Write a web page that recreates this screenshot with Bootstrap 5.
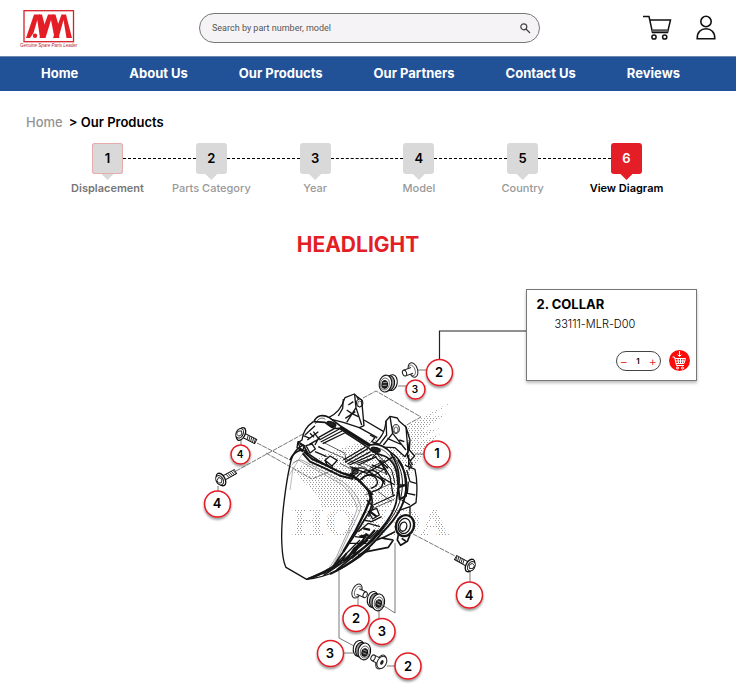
<!DOCTYPE html>
<html lang="en">
<head>
<meta charset="utf-8">
<meta name="viewport" content="width=device-width, initial-scale=1">
<title>Headlight – Our Products</title>
<link href="https://cdn.jsdelivr.net/npm/bootstrap@5.3.0/dist/css/bootstrap.min.css" rel="stylesheet">
<style>
  :root { --brand-red: #e31e26; --brand-blue: #215196; }
  body { font-family: Inter, "Liberation Sans", sans-serif; color: #000; background: #fff; }
  .site-head { height: 56px; padding: 0 20px; }
  .brand-logo { width: 58px; height: 40px; display: block; overflow: visible; }
  .search-box { height: 30px; margin: 0 103px 0 121px; background: #f5f3f5; border: 1px solid #777; border-radius: 15px; padding: 0 8px 0 12px; }
  .search-box .form-control { font: 400 9px/16px Roboto, "Liberation Sans", sans-serif; color: #555; min-height: 0; height: 20px; }
  .search-box .form-control::placeholder { color: #555; opacity: 1; }
  .head-tools { gap: 24px; }
  .main-nav { height: 35px; padding: 0 56px 2px 41px; background: var(--brand-blue); border-top: 1px solid #7189ad; }
  .main-nav a { font-size: 13px; line-height: 16px; font-weight: 700; }
  .crumbs { padding: 23px 26px 0; gap: 6px; font-size: 13px; line-height: 16px; }
  .crumbs a { color: #949494; font-weight: 500; }
  .crumbs .here { font-weight: 600; }
  .steps { padding: 13px 94px 0 92px; }
  .step { width: 31px; }
  .step-num { width: 31px; height: 31px; border-radius: 3px; background: #d9d9d9; font-size: 13px; line-height: 31px; font-weight: 600; }
  .step-tip { width: 12px; height: 6px; background: #d9d9d9; clip-path: polygon(0 0, 100% 0, 50% 100%); }
  .step-name { font-size: 11px; line-height: 16px; font-weight: 500; color: #999; white-space: nowrap; }
  .step.first .step-num { box-shadow: inset 0 0 0 1px #e7abae; }
  .step.first .step-name { color: #777; font-weight: 600; }
  .step.active .step-num { background: var(--brand-red); color: #fff; }
  .step.active .step-tip { background: var(--brand-red); }
  .step.active .step-name { color: #000; font-weight: 600; }
  .step-line { height: 0; margin-top: 15px; border-top: 1px dashed #000; }
  .part-title { margin: 37px 20px 0 0; font-size: 21px; line-height: 24px; font-weight: 700; color: var(--brand-red); }
  .diagram { margin-top: 13px; }
  .diagram svg.art { display: block; width: 100%; height: auto; }
  .diagram a { text-decoration: none; }
  .part-card { left: 71.4%; top: 19px; width: 171px; border: 1px solid #777; border-radius: 0; box-shadow: 0 2px 3px #0004; padding: 6px 6px 9px 10px; }
  .part-card h2 { font-size: 13px; line-height: 16px; font-weight: 700; margin: 0; }
  .part-code { font-size: 11px; line-height: 16px; font-weight: 300; padding-left: 18px; margin: 4px 0 18px; }
  .qty { width: 45px; height: 20px; border: 1px solid #444; border-radius: 10px; padding: 0 3px; }
  .qty button { width: 8px; font-size: 13px; line-height: 16px; color: var(--brand-red); background: none; font-weight: 300; }
  .qty input { width: 16px; font-size: 8px; line-height: 16px; font-weight: 600; background: none; }
  .add-btn { width: 21px; height: 21px; background: #f80d0d; }
  .mark-big { font: 600 13px Inter, sans-serif; }
  .mark-small { font: 600 10px Inter, sans-serif; }
  .wm { font: 700 36px "DejaVu Serif", serif; }
</style>
<script src="https://cdn.jsdelivr.net/npm/bootstrap@5.3.0/dist/js/bootstrap.bundle.min.js"></script>
</head>
<body>
<header>
  <div class="site-head d-flex align-items-center">
    <a href="#" aria-label="Genuine Spare Parts Leader" class="flex-shrink-0">
      <svg class="brand-logo" viewBox="0 0 58 40">
        <rect x="4" y="2.700" width="49.500" height="31" fill="#fff" stroke="#d5222a" stroke-width="1.300"/>
        <g fill="#e31e26">
          <path d="M6 30L14 6.500H20L25 30H20L17.300 12L13.500 25L10 30z"/>
          <path d="M19.500 30L28 6.500H34L39.500 30H34.500L31 12L25.500 30z"/>
          <path d="M33 30L41.500 6.500H46L52 30H46.500L43.500 12L38.500 30z"/>
          <path d="M19 6.500L22 6.500L26.500 24L24 29zM32.500 6.500H35.500L40 22L38 28z"/>
        </g>
        <circle cx="15" cy="27.800" r="2.200" fill="#e31e26"/>
        <text x="0" y="38.500" font-family="Liberation Sans, sans-serif" font-size="4.500" font-style="italic" fill="#b3262c">Genuine Spare Parts Leader</text>
      </svg>
    </a>
    <form class="search-box d-flex align-items-center flex-fill" role="search">
      <label for="q" class="visually-hidden">Search</label>
      <input id="q" type="text" class="form-control border-0 bg-transparent shadow-none p-0" placeholder="Search by part number, model">
      <button type="button" class="btn p-0 border-0 d-flex" aria-label="Search">
        <svg width="12" height="12" viewBox="0 0 12 12" fill="none" stroke="#444" stroke-width="1.200"><circle cx="4.800" cy="4.800" r="3"/><path d="M7 7l4 4"/></svg>
      </button>
    </form>
    <div class="head-tools d-flex align-items-center flex-shrink-0">
      <a href="#" aria-label="Cart" class="d-flex">
        <svg width="29" height="26" viewBox="0 0 29 26" fill="none" stroke="#111" stroke-width="1.500">
          <path d="M0 1.500H6L9.500 17.500H24.500L27.500 5H7"/><path d="M9 15.500H25" stroke="#555" stroke-width="2.500"/>
          <circle cx="11" cy="22" r="2.100"/><circle cx="21.700" cy="22" r="2.100"/>
        </svg>
      </a>
      <a href="#" aria-label="Account" class="d-flex">
        <svg width="20" height="26" viewBox="0 0 20 26" fill="none" stroke="#111" stroke-width="1.600">
          <circle cx="10" cy="6.500" r="5.200"/><path d="M1.200 23.800C1 17 5 13.700 10 13.700S19 17 18.800 23.800Z"/>
        </svg>
      </a>
    </div>
  </div>
  <nav class="main-nav d-flex align-items-center justify-content-between" aria-label="Main">
    <a class="text-white text-decoration-none" href="#">Home</a>
    <a class="text-white text-decoration-none" href="#">About Us</a>
    <a class="text-white text-decoration-none" href="#">Our Products</a>
    <a class="text-white text-decoration-none" href="#">Our Partners</a>
    <a class="text-white text-decoration-none" href="#">Contact Us</a>
    <a class="text-white text-decoration-none" href="#">Reviews</a>
  </nav>
</header>

<main>
  <nav class="crumbs d-flex" aria-label="Breadcrumb">
    <a href="#" class="text-decoration-none">Home</a>
    <span class="here">&gt; Our Products</span>
  </nav>

  <div class="steps d-flex align-items-start">
    <div class="step first d-flex flex-column align-items-center"><div class="step-num text-center">1</div><div class="step-tip"></div><div class="step-name">Displacement</div></div>
    <div class="step-line flex-fill"></div>
    <div class="step d-flex flex-column align-items-center"><div class="step-num text-center">2</div><div class="step-tip"></div><div class="step-name">Parts Category</div></div>
    <div class="step-line flex-fill"></div>
    <div class="step d-flex flex-column align-items-center"><div class="step-num text-center">3</div><div class="step-tip"></div><div class="step-name">Year</div></div>
    <div class="step-line flex-fill"></div>
    <div class="step d-flex flex-column align-items-center"><div class="step-num text-center">4</div><div class="step-tip"></div><div class="step-name">Model</div></div>
    <div class="step-line flex-fill"></div>
    <div class="step d-flex flex-column align-items-center"><div class="step-num text-center">5</div><div class="step-tip"></div><div class="step-name">Country</div></div>
    <div class="step-line flex-fill"></div>
    <div class="step active d-flex flex-column align-items-center"><div class="step-num text-center">6</div><div class="step-tip"></div><div class="step-name">View Diagram</div></div>
  </div>

  <h1 class="part-title text-center">HEADLIGHT</h1>

  <div class="diagram position-relative">
    <svg class="art" viewBox="0 270 736 422" role="group" aria-label="Headlight parts diagram">
      <defs>
        <pattern id="dots" width="3" height="4" patternUnits="userSpaceOnUse"><path d="M0 0h1v1H0zM1 2h1v1H1z" fill="#999"/></pattern>
        <filter id="drop" x="-30%" y="-30%" width="160%" height="170%"><feDropShadow dx="0" dy="2" stdDeviation="1" flood-opacity=".4"/></filter>
        <g id="bolt" fill="#fff" stroke="#111">
          <path d="M2 -2.300H16.500V2.300H2z" stroke-width=".9"/>
          <path d="M7 -2.300l1 4.600M9 -2.300l1 4.600M11 -2.300l1 4.600M13 -2.300l1 4.600M15 -2.300l1 4.600" stroke-width=".8"/>
          <ellipse rx="4" ry="6.800" stroke-width="1.300"/><ellipse cx="-1.500" rx="3.500" ry="5" stroke-width="1"/><path d="M-4 -1L-1 -3L1 0L-1 3L-4 2z" stroke-width=".8"/>
        </g>
        <g id="grommet" fill="#fff" stroke="#111" stroke-width="1.100">
          <ellipse cx="3.500" cy="-1.500" rx="5.500" ry="8"/><ellipse cx="1" cy="-.5" rx="5.500" ry="7.500" fill="#999"/>
          <ellipse cx="-2.500" cy=".5" rx="6.200" ry="8.500"/><ellipse cx="-3" cy="1" rx="4.500" ry="6" stroke-width=".6"/>
          <ellipse cx="-3" cy="1.500" rx="2.800" ry="3.800" fill="#222"/>
          <path d="M-5 0l4 -1M-5 3l4-1" stroke="#bbb" stroke-width=".7"/>
        </g>
        <g id="collar" fill="#fff" stroke="#222" stroke-width="1">
          <ellipse rx="4.500" ry="7.500"/><ellipse cx="1" rx="3" ry="5.500" stroke-width=".6"/><path d="M1 -3H9V3H1" /><ellipse cx="9" rx="2" ry="3"/>
        </g>
      </defs>

      <!-- Dotted wing watermark -->
      <g fill="url(#dots)">
        <path d="M453 401L400 430L330 452L292 470L318 496L322 508H390L425 450L440 434L412 444L440 428L420 432L446 414L428 418z"/>
        <text class="wm" x="291" y="535">HONDA</text>
      </g>

      <!-- Projection lines -->
      <g fill="none" stroke="#555" stroke-width=".8">
        <path d="M236 471L303 434M257 443L290 460M266 453L312 479L333 470M363 398L376 391L421 417L403 427M413 534L455 556" stroke-dasharray="5 1"/>
        <path d="M395 543V613M339 571V638M395 613L384 606M339 638L354 646" />
        <path d="M418 370H428M398 386H408M415 454H426M241 440V447M218 486V493M470 572V584M358 597V607M379 609V622M343 653H353M387 666H396"/>
      </g>
      <path d="M526 331H439.500V361" fill="none" stroke="#222" stroke-width="1.200"/>

      <!-- Lens and lower rim -->
      <g transform="translate(190 410) scale(.3333)" fill="none" stroke="#151515" stroke-linejoin="round">
        <path d="M342 105C322 112 306 132 300 165C288 220 274 320 275 385C276 430 279 455 288 472L350 508C410 503 460 475 510 440L540 415" stroke-width="4"/>
        <path d="M342 105L350 128C380 150 420 175 470 195L505 208C515 215 525 232 540 250C552 270 548 292 530 318C500 370 450 440 420 482L350 508" stroke-width="5"/>
        <path d="M305 165C320 150 330 145 345 155L455 213C485 235 510 265 512 295C500 330 475 370 450 430L416 488M310 158L325 150L450 220C475 238 495 265 502 295C490 335 465 380 440 440L405 493" stroke="#777" stroke-width="2"/>
        <path d="M355 505C390 490 420 480 440 460L510 390M370 503L430 474L535 390M400 497L470 450L540 398" stroke-width="4"/>
        <path d="M430 475l20-25M450 460l20-30M470 448l25-35M490 435l20-35M400 490l15-12M510 410l20-40" stroke-width="6"/>
        <path d="M295 200L335 135L350 120M300 240L310 170" stroke="#999" stroke-width="2"/>
      </g>

      <!-- Top housing, mounting ears and front strap -->
      <g transform="translate(290 385) scale(.3333)" fill="none" stroke="#151515" stroke-width="4" stroke-linejoin="round">
        <path d="M70 110C48 125 38 145 36 165L25 172L30 190L48 200M45 150L75 122M52 165L85 140M58 178L90 160M24 170l18 12-4 18-17-12zM48 182l18 -5 10 15-16 12zM40 152l20 8M70 140l15 20-10 20M75 200L110 215M85 185L105 195M60 145l12 12M45 190l10 15M30 178l10 4"/>
        <path d="M85 185L230 250M150 235L215 268" stroke-width="2"/>
        <path d="M0 225C8 205 20 198 35 195" stroke-width="5"/>
        <path d="M112 100C140 88 158 62 165 38L193 27L200 34L215 45L222 122L208 128L160 112z" fill="#fff"/>
        <path d="M160 42L158 70L145 93M194 30L198 68L170 112M198 68L215 120M185 85l20 10M166 100l30-20M200 34L205 42M222 105L290 145M208 128L262 158M175 60l15 -10M170 75l15 10"/>
        <ellipse cx="209" cy="54" rx="10" ry="12" stroke-width="3"/><ellipse cx="209" cy="57" rx="6" ry="9" stroke-width="2"/>
        <path d="M242 185C270 165 285 145 288 108L300 94L322 99L328 109L348 126L354 200L345 215L315 188z" fill="#fff"/>
        <path d="M288 108L290 150L270 176M300 94L308 145L280 180M308 145L348 195M292 160l45 20M240 150l15 8-10 12 25 8M328 165l15 5"/>
        <ellipse cx="318" cy="132" rx="10" ry="13" stroke-width="3"/><ellipse cx="318" cy="135" rx="6" ry="9" stroke-width="2"/>
        <path d="M72 110C80 90 100 87 118 98L150 122L242 180C262 174 280 180 302 202C330 220 345 245 347 300L324 300C322 250 310 228 288 215C270 207 245 205 238 190L148 130C132 132 128 130 105 112z" fill="#fff" stroke-width="5"/>
        <path d="M76 117C84 98 98 96 106 103M258 188C290 192 320 225 330 300" stroke-width="2"/>
        <ellipse cx="124" cy="117" rx="14" ry="6" fill="#222" transform="rotate(18 124 117)"/>
        <ellipse cx="257" cy="194" rx="14" ry="6" fill="#222" transform="rotate(18 257 194)"/>
        <path d="M150 126L240 184" stroke-width="7"/>
        <path d="M88 165L148 132M92 171L156 138M98 176L164 144M165 232L235 190M172 237L242 200M178 240L248 208M160 225L226 186M85 158L138 128" stroke-width="4"/>
        <path d="M100 172L165 205M164 144L225 178M165 205L168 232" stroke-width="2"/>
        <path d="M38 205L60 230L105 250L150 272L190 282M42 200L66 222L110 242L155 264L195 274" stroke-width="6"/>
        <path d="M105 226L120 213L142 226L126 243zM105 226L110 238L128 250L126 243" fill="#fff"/>
        <circle cx="195" cy="258" r="9"/><circle cx="195" cy="258" r="4"/>
        <path d="M185 275C190 240 220 245 240 262L285 290M250 208C265 225 285 245 290 270M205 240L260 215M215 285C230 255 270 270 285 299M348 126L360 165L358 195L374 213L360 228M358 170L352 215L368 240M356 232l8 12-8 10M265 225l30 25M245 240l40 15" />
      </g>

      <!-- Side shell, strap tail and adjuster ring -->
      <g transform="translate(330 440) scale(.3333)" fill="none" stroke="#151515" stroke-width="4" stroke-linejoin="round">
        <path d="M204 60C225 90 236 120 226 162C220 205 185 250 155 280C120 325 60 375 0 402" stroke-width="6"/>
        <path d="M182 40C205 75 212 105 205 140L198 190C185 235 150 270 105 320L20 390M200 180C190 228 160 262 130 300L65 355" stroke-width="5"/>
        <path d="M192 50C218 90 222 125 213 170C205 215 170 255 140 290" stroke-width="3"/>
        <path d="M205 142L228 135V168L209 178z" stroke-width="6"/>
        <path d="M236 80L255 88C262 118 262 155 258 188L240 200V225M240 200L212 210M230 90L240 125L258 130M235 125L232 160L256 165M225 75L238 82M215 180L240 195M236 45v35"/>
        <ellipse cx="225" cy="257" rx="27" ry="32" transform="rotate(18 225 257)" fill="#fff" stroke-width="7"/>
        <ellipse cx="223" cy="258" rx="18" ry="23" transform="rotate(18 223 258)"/>
        <ellipse cx="220" cy="260" rx="10" ry="14" transform="rotate(18 220 260)" stroke-width="4"/>
        <path d="M240 285L232 304L212 316L202 300L205 285M215 295l12 8M190 300L175 322L110 335L85 345M195 275L165 290L140 300M160 295L190 300" stroke-width="5"/>
        <path d="M75 120C90 90 130 80 148 105C170 130 155 150 125 155M85 125C100 105 125 98 138 115C148 130 140 140 122 145M60 80L110 100L190 50M130 195L195 165M150 110L195 135M115 215l25-10 8 20-20 12zM100 240l25 5 30-15M85 275l30-25 35 10M75 290l45 5 25-25M60 310l50 0M110 180l20 20-15 30M150 60l30 50 10 60"/>
        <path d="M105 165L185 130M130 205L192 178M100 70L165 100M145 155l40 30" stroke-width="2"/>
        <path d="M60 100L90 125L115 150L122 175L105 215L75 275L40 335M110 145l18 20M120 215l20 15M88 290l28-5M100 265l20 5M70 330l30-30M100 310l35-40M40 365l40-40" stroke-width="7"/>
        <path d="M130 30L185 90L195 130M150 30L125 55L80 70M165 60L120 85M175 80l-50 30" stroke-width="3"/>
      </g>

      <use href="#bolt" transform="translate(241 434) rotate(27)"/>
      <use href="#bolt" transform="translate(221 479.500) rotate(-29)"/>
      <use href="#bolt" transform="translate(470 565.500) rotate(209)"/>
      <use href="#collar" transform="translate(413 370) rotate(160)"/>
      <use href="#collar" transform="translate(357 591) rotate(25)"/>
      <g transform="translate(381 662) rotate(208)"><use href="#collar"/><ellipse cx="-1" rx="4.500" ry="6.500" fill="#fff" stroke="#222"/><ellipse cx="-1" rx="1.500" ry="2.500" fill="#222"/></g>
      <use href="#grommet" transform="translate(388 383.500) rotate(10)"/>
      <use href="#grommet" transform="translate(376 601.500) scale(-1 1) rotate(-10)"/>
      <use href="#grommet" transform="translate(362 650.500) scale(-1 1) rotate(-10)"/>

      <!-- Callouts -->
      <g fill="#fff" stroke="#e31e26" stroke-width="1.500" filter="url(#drop)">
        <circle cx="439.500" cy="372.500" r="13"/><circle cx="415.500" cy="389.500" r="9.500"/><circle cx="437" cy="454" r="13"/>
        <circle cx="240.500" cy="454.500" r="9.500"/><circle cx="217.500" cy="504" r="13"/><circle cx="469.500" cy="595" r="13"/>
        <circle cx="356" cy="618.500" r="13"/><circle cx="382" cy="631.500" r="13"/><circle cx="330.500" cy="653.500" r="13"/><circle cx="408" cy="666" r="13"/>
      </g>
      <g text-anchor="middle" fill="#000">
        <a href="#p2"><text class="mark-big" x="439" y="377">2</text></a>
        <a href="#p3"><text class="mark-small" x="415" y="393">3</text></a>
        <a href="#p1"><text class="mark-big" x="437" y="458">1</text></a>
        <a href="#p4"><text class="mark-small" x="240" y="458">4</text></a>
        <a href="#p4"><text class="mark-big" x="217" y="508">4</text></a>
        <a href="#p4"><text class="mark-big" x="469" y="600">4</text></a>
        <a href="#p2"><text class="mark-big" x="356" y="623">2</text></a>
        <a href="#p3"><text class="mark-big" x="382" y="636">3</text></a>
        <a href="#p3"><text class="mark-big" x="330" y="658">3</text></a>
        <a href="#p2"><text class="mark-big" x="408" y="671">2</text></a>
      </g>
    </svg>

    <section class="part-card card position-absolute" id="p2">
      <h2>2. COLLAR</h2>
      <p class="part-code">33111-MLR-D00</p>
      <div class="d-flex align-items-center justify-content-end gap-2">
        <div class="qty d-flex align-items-center justify-content-between">
          <button type="button" class="border-0 p-0" aria-label="Decrease">−</button>
          <input type="text" class="border-0 p-0 text-center" value="1" aria-label="Quantity">
          <button type="button" class="border-0 p-0" aria-label="Increase">+</button>
        </div>
        <button type="button" class="add-btn border-0 rounded-circle p-0 d-flex" aria-label="Add to cart">
          <svg width="21" height="21" viewBox="0 0 21 21" fill="none" stroke="#fff" stroke-width="1">
            <path d="M10.500 1V6.500M8.500 4.500L10.500 6.500L12.500 4.500M3.500 7H5.500L7.500 15.500H15M6 8.500H16.500L15 13.500H7M9 8.500L9.500 13.500M11.500 8.500V13.500M14 8.500L13.500 13.500M6.500 11H15.500"/>
            <circle cx="8.500" cy="18" r="1"/><circle cx="13.500" cy="18" r="1"/>
          </svg>
        </button>
      </div>
    </section>
  </div>
</main>
</body>
</html>
